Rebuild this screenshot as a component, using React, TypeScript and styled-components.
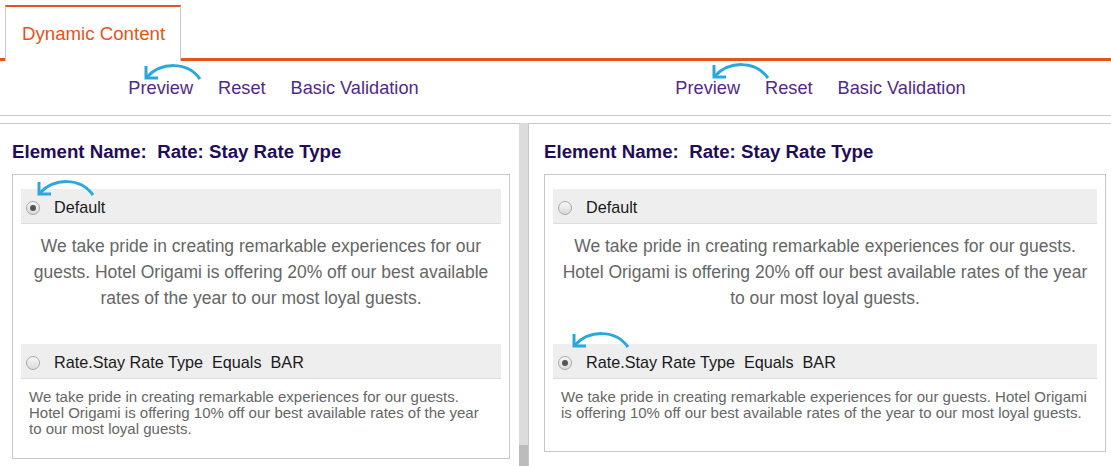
import styled, { createGlobalStyle } from "styled-components";

const GlobalStyle = createGlobalStyle`
  html, body {
    margin: 0;
    padding: 0;
    background: #ffffff;
    font-family: "Liberation Sans", Arial, sans-serif;
  }
`;

const ORANGE = "#e0561b";
const LINE = "#c8c8c8";
const BLUE = "#29a8e0";

type ArrowSpot = { x: number; y: number };

// curved annotation arrow pointing down-left
function CurveArrow({ x, y }: ArrowSpot) {
  return (
    <ArrowSvg $x={x} $y={y} width="60" height="20" viewBox="0 0 60 20">
      <path d="M4 16 C 18 1, 44 0, 57 18" />
      <path d="M3 5 L3 17 L15 17" />
    </ArrowSvg>
  );
}

function Toolbar({ arrow }: { arrow: ArrowSpot }) {
  return (
    <ToolHalf>
      <LinkGroup>
        <ToolLink>Preview</ToolLink>
        <ToolLink>Reset</ToolLink>
        <ToolLink>Basic Validation</ToolLink>
        <CurveArrow {...arrow} />
      </LinkGroup>
    </ToolHalf>
  );
}

type Rule = {
  label: string;
  text: string;
  big?: boolean;
  checked?: boolean;
  arrow?: ArrowSpot;
};

function RuleBlock({ rule }: { rule: Rule }) {
  return (
    <>
      <Band>
        <Radio $checked={!!rule.checked} />
        <BandLabel>{rule.label}</BandLabel>
        {rule.arrow && <CurveArrow {...rule.arrow} />}
      </Band>
      {rule.big ? <BigText>{rule.text}</BigText> : <SmallText>{rule.text}</SmallText>}
    </>
  );
}

const bigCopy =
  "We take pride in creating remarkable experiences for our guests. Hotel Origami is offering 20% off our best available rates of the year to our most loyal guests.";
const smallCopy =
  "We take pride in creating remarkable experiences for our guests. Hotel Origami is offering 10% off our best available rates of the year to our most loyal guests.";

export default function App() {
  const leftRules: Rule[] = [
    { label: "Default", text: bigCopy, big: true, checked: true, arrow: { x: 15, y: -12 } },
    { label: "Rate.Stay Rate Type  Equals  BAR", text: smallCopy },
  ];
  const rightRules: Rule[] = [
    { label: "Default", text: bigCopy, big: true },
    { label: "Rate.Stay Rate Type  Equals  BAR", text: smallCopy, checked: true, arrow: { x: 18, y: -15 } },
  ];

  return (
    <Page>
      <GlobalStyle />
      <TabBar>
        <Tab>Dynamic Content</Tab>
      </TabBar>
      <ToolRow>
        <Toolbar arrow={{ x: 15, y: -16 }} />
        <Toolbar arrow={{ x: 36, y: -17 }} />
      </ToolRow>
      <Panels>
        <LeftPanel>
          <Title>Element Name:{"\u00a0 "}Rate: Stay Rate Type</Title>
          <RuleBox $tail={21}>
            {leftRules.map((r) => (
              <RuleBlock key={r.label} rule={r} />
            ))}
          </RuleBox>
        </LeftPanel>
        <Scrollbar>
          <Thumb />
        </Scrollbar>
        <RightPanel>
          <Title>Element Name:{"\u00a0 "}Rate: Stay Rate Type</Title>
          <RuleBox $tail={30}>
            {rightRules.map((r) => (
              <RuleBlock key={r.label} rule={r} />
            ))}
          </RuleBox>
        </RightPanel>
      </Panels>
    </Page>
  );
}

const Page = styled.div`
  width: 1111px;
  height: 466px;
  overflow: hidden;
`;

const TabBar = styled.div`
  display: flex;
  height: 61px;
  box-sizing: border-box;
  padding: 5px 0 0 5px;
  border-bottom: 3px solid ${ORANGE};
`;

const Tab = styled.div`
  display: flex;
  align-items: center;
  height: 56px;
  box-sizing: border-box;
  margin-bottom: -3px;
  padding: 0 15px 0 16px;
  background: #ffffff;
  border-top: 2px solid ${ORANGE};
  border-left: 1px solid ${LINE};
  border-right: 1px solid ${LINE};
  color: ${ORANGE};
  font-size: 18.67px;
`;

const ToolRow = styled.div`
  display: grid;
  grid-template-columns: 1fr 1fr;
  height: 55px;
  box-sizing: border-box;
  padding-right: 17px;
  border-bottom: 1px solid ${LINE};
`;

const ToolHalf = styled.div`
  display: flex;
  justify-content: center;
  align-items: center;
`;

const LinkGroup = styled.div`
  position: relative;
  display: flex;
  gap: 25px;
`;

const ToolLink = styled.span`
  font-size: 18.2px;
  line-height: 22px;
  color: #52298b;
  cursor: pointer;
`;

const ArrowSvg = styled.svg<{ $x: number; $y: number }>`
  position: absolute;
  left: ${(p) => p.$x}px;
  top: ${(p) => p.$y}px;
  overflow: visible;
  fill: none;
  stroke: ${BLUE};
  stroke-width: 3;
  pointer-events: none;
`;

const Panels = styled.div`
  display: flex;
  height: 343px;
  margin-top: 7px;
  overflow: hidden;
`;

const LeftPanel = styled.div`
  width: 519px;
  flex: none;
  box-sizing: border-box;
  padding: 17px 9px 0 12px;
  border-top: 1px solid ${LINE};
`;

const RightPanel = styled.div`
  flex: 1;
  box-sizing: border-box;
  padding: 17px 5px 0 15px;
  border-top: 1px solid ${LINE};
  border-left: 1px solid ${LINE};
`;

const Scrollbar = styled.div`
  width: 9px;
  flex: none;
  display: flex;
  flex-direction: column;
  justify-content: flex-end;
  background: #dcdcdc;
`;

const Thumb = styled.div`
  height: 21px;
  background: #bcbcbc;
`;

const Title = styled.div`
  font-size: 18.67px;
  line-height: 22px;
  font-weight: bold;
  color: #1f0d5a;
  margin-bottom: 11px;
`;

const RuleBox = styled.div<{ $tail: number }>`
  border: 1px solid ${LINE};
  padding: 14px 8px ${(p) => p.$tail}px;
`;

const Band = styled.div`
  position: relative;
  display: flex;
  align-items: center;
  height: 35px;
  box-sizing: border-box;
  background: #eeeeee;
  border-bottom: 1px solid #dddddd;
  padding: 3px 0 0 5px;
`;

const Radio = styled.span<{ $checked: boolean }>`
  position: relative;
  width: 14px;
  height: 14px;
  box-sizing: border-box;
  border-radius: 50%;
  border: 1px solid #a9a9a9;
  background: linear-gradient(#f7f7f7, #dadada);
  margin-right: 14px;
  flex: none;

  &::after {
    content: "";
    display: ${(p) => (p.$checked ? "block" : "none")};
    position: absolute;
    left: 3px;
    top: 3px;
    width: 6px;
    height: 6px;
    border-radius: 50%;
    background: #555555;
  }
`;

const BandLabel = styled.span`
  font-size: 16.2px;
  color: #1a1a1a;
  white-space: pre;
`;

const BigText = styled.p`
  margin: 9px 0 33px;
  text-align: center;
  font-size: 17.5px;
  line-height: 26px;
  color: #666666;
`;

const SmallText = styled.p`
  margin: 10px 0 0;
  padding: 0 8px;
  font-size: 15px;
  line-height: 16px;
  color: #666666;
`;
